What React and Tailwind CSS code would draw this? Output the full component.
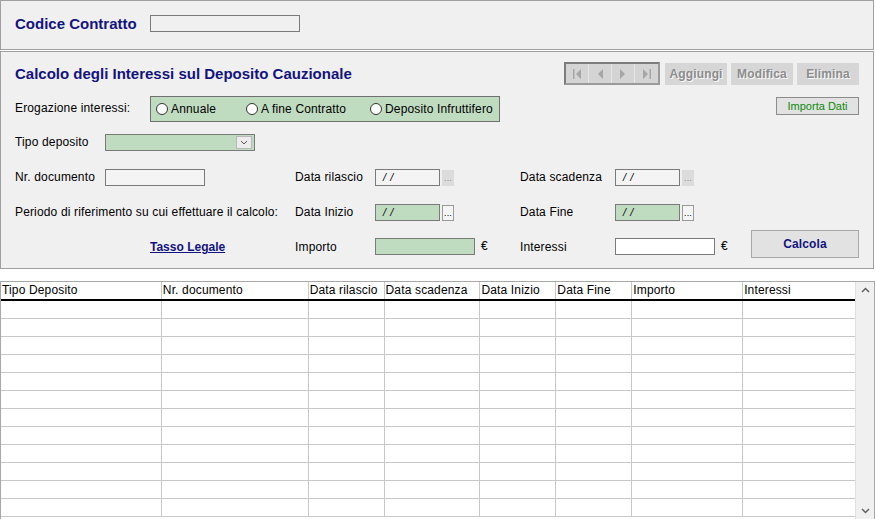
import React from "react";

const navy = "text-[#13137f]";

// Small "..." picker button beside date fields
const DotsButton = ({ enabled }) => (
  <div
    className={`ml-[2px] w-[12px] h-[16px] flex items-end justify-center pb-[2px] text-[9px] leading-none border ${
      enabled ? "bg-[#f4f4f4] border-[#9a9a9a] text-black" : "bg-[#dcdcdc] border-[#dcdcdc] text-[#8a8a8a]"
    }`}
  >
    ...
  </div>
);

const DateField = ({ green, enabled }) => (
  <div className="flex items-center">
    <div
      className={`w-[65px] h-[17px] border border-[#7a7a7a] pl-[7px] text-[11px] italic leading-[15px] flex gap-[4px] ${
        green ? "bg-[#c0dcc0]" : "bg-[#f4f4f4]"
      }`}
    >
      <span>/</span>
      <span>/</span>
    </div>
    <DotsButton enabled={enabled} />
  </div>
);

const Radio = ({ label, className }) => (
  <div className={`flex items-center ${className}`}>
    <span className="w-[12px] h-[12px] rounded-full border border-[#333] bg-white" />
    <span className="ml-[3px]">{label}</span>
  </div>
);

const NavIcon = ({ d }) => (
  <div className="w-[23px] h-full bg-[#d4d4d4] flex items-center justify-center border-r border-[#e6e6e6] last:border-r-0">
    <svg width="12" height="14" viewBox="0 0 12 14">
      <path d={d} fill="#a6a6a6" />
    </svg>
  </div>
);

const GrayButton = ({ children }) => (
  <div className="w-[62px] h-[22px] bg-[#d6d6d6] flex items-center justify-center font-bold text-[12px] text-[#8c8c8c] [text-shadow:1px_1px_0_#fafafa]">
    {children}
  </div>
);

const columns = [
  ["Tipo Deposito", 161],
  ["Nr. documento", 147],
  ["Data rilascio", 76],
  ["Data scadenza", 96],
  ["Data Inizio", 76],
  ["Data Fine", 76],
  ["Importo", 111],
  ["Interessi", 112],
];

export default function App() {
  const rows = Array.from({ length: 12 });

  return (
    <div className="w-[875px] h-[519px] bg-white overflow-hidden text-[12px] tracking-[0.15px] text-black font-['Liberation_Sans',Arial,sans-serif]">
      {/* Codice Contratto panel */}
      <div className="w-[874px] h-[50px] bg-[#f0f0f0] border border-[#a0a0a0] flex items-start pl-[14px] pt-[14px]">
        <div className={`w-[135px] font-bold text-[15px] leading-[17px] tracking-normal ${navy}`}>Codice Contratto</div>
        <div className="w-[150px] h-[17px] border border-[#7a7a7a] bg-[#f0f0f0]" />
      </div>

      {/* Calcolo panel */}
      <div className="w-[874px] h-[218px] mt-[1px] bg-[#f0f0f0] border border-[#a0a0a0] pl-[14px] pr-[14px] flex flex-col">
        {/* title + toolbar */}
        <div className="mt-[10px] h-[23px] flex items-center">
          <div className={`font-bold text-[15px] tracking-normal ${navy} mt-[2px]`}>Calcolo degli Interessi sul Deposito Cauzionale</div>
          <div className="ml-auto flex items-center h-[23px]">
            <div className="h-[23px] flex border-2 border-[#7c7c7c] border-r-[#9a9a9a] border-b-[#9a9a9a]">
              <NavIcon d="M2 2h1.5v10H2zM10 2v10L5 7z" />
              <NavIcon d="M9 2v10L4 7z" />
              <NavIcon d="M3 2v10l5-5z" />
              <NavIcon d="M2 2v10l5-5zM8.5 2H10v10H8.5z" />
            </div>
            <div className="ml-[5px] flex gap-[4px]">
              <GrayButton>Aggiungi</GrayButton>
              <GrayButton>Modifica</GrayButton>
              <GrayButton>Elimina</GrayButton>
            </div>
          </div>
        </div>

        {/* erogazione */}
        <div className="mt-[11px] h-[26px] flex items-start">
          <div className="w-[135px] h-[24px] flex items-center">Erogazione interessi:</div>
          <div className="w-[350px] h-[26px] bg-[#c0dcc0] border border-[#707070] flex items-center pl-[5px]">
            <Radio label="Annuale" className="w-[90px]" />
            <Radio label="A fine Contratto" className="w-[124px]" />
            <Radio label="Deposito Infruttifero" />
          </div>
          <div className="ml-auto mt-[1px] w-[83px] h-[18px] bg-[#e2e2e2] border border-[#8c8c8c] flex items-center justify-center text-[11px] tracking-normal text-[#0a8a0a]">
            Importa Dati
          </div>
        </div>

        {/* tipo deposito */}
        <div className="mt-[12px] h-[17px] flex items-center">
          <div className="w-[90px] -mt-[1px]">Tipo deposito</div>
          <div className="w-[150px] h-[17px] bg-[#c0dcc0] border border-[#7a7a7a] flex justify-end items-center pr-[2px]">
            <div className="w-[16px] h-[13px] bg-[#ececec] border border-[#b8b8b8] flex items-center justify-center">
              <svg width="8" height="5" viewBox="0 0 8 5">
                <path d="M1 1l3 3 3-3" stroke="#555" strokeWidth="1" fill="none" />
              </svg>
            </div>
          </div>
        </div>

        {/* nr documento */}
        <div className="mt-[18px] h-[17px] flex items-center">
          <div className="w-[90px] -mt-[1px]">Nr. documento</div>
          <div className="w-[100px] h-[17px] border border-[#7a7a7a] bg-[#f4f4f4]" />
          <div className="ml-[90px] w-[80px] -mt-[1px]">Data rilascio</div>
          <DateField />
          <div className="ml-[66px] w-[95px] -mt-[1px]">Data scadenza</div>
          <DateField />
        </div>

        {/* periodo */}
        <div className="mt-[18px] h-[17px] flex items-center">
          <div className="w-[280px] -mt-[1px]">Periodo di riferimento su cui effettuare il calcolo:</div>
          <div className="w-[80px] -mt-[1px]">Data Inizio</div>
          <DateField green enabled />
          <div className="ml-[66px] w-[95px] -mt-[1px]">Data Fine</div>
          <DateField green enabled />
        </div>

        {/* importo */}
        <div className="mt-[9px] h-[28px] flex items-start">
          <div className="w-[135px]" />
          <div className={`w-[145px] mt-[9px] leading-[17px] font-bold underline tracking-normal ${navy}`}>Tasso Legale</div>
          <div className="w-[80px] mt-[9px] leading-[17px]">Importo</div>
          <div className="w-[100px] mt-[8px] h-[17px] bg-[#c0dcc0] border border-[#7a7a7a]" />
          <div className="ml-[6px] w-[39px] mt-[8px] leading-[17px]">€</div>
          <div className="w-[95px] mt-[9px] leading-[17px]">Interessi</div>
          <div className="w-[100px] mt-[8px] h-[17px] bg-white border border-[#7a7a7a]" />
          <div className="ml-[6px] mt-[8px] leading-[17px]">€</div>
          <div className="ml-auto w-[108px] h-[28px] bg-[#e2e2e2] border border-[#a8a8a8] flex items-center justify-center">
            <span className={`font-bold ${navy}`}>Calcola</span>
          </div>
        </div>
      </div>

      {/* table */}
      <div className="mt-[12px] w-[875px] h-[239px] border border-[#a8a8a8] flex">
        <div className="w-[854px]">
          <div className="flex h-[19px] border-b-2 border-black">
            {columns.map(([name, w], i) => (
              <div
                key={name}
                style={{ width: w }}
                className={`h-full leading-[17px] pl-[1px] whitespace-nowrap overflow-hidden ${i < columns.length - 1 ? "border-r border-[#c8c8c8]" : ""}`}
              >
                {name}
              </div>
            ))}
          </div>
          {rows.map((_, r) => (
            <div key={r} className="flex h-[18px] border-b border-[#c8c8c8]">
              {columns.map(([name, w], i) => (
                <div
                  key={name}
                  style={{ width: w }}
                  className={`h-full ${i < columns.length - 1 ? "border-r border-[#c8c8c8]" : ""}`}
                />
              ))}
            </div>
          ))}
        </div>
        <div className="w-[19px] h-full bg-[#f0f0f0] border-l border-[#e0e0e0] flex flex-col justify-between items-center py-[5px]">
          <svg width="9" height="6" viewBox="0 0 9 6">
            <path d="M1 5l3.5-3.5L8 5" stroke="#606060" strokeWidth="1.5" fill="none" />
          </svg>
          <svg width="9" height="6" viewBox="0 0 9 6">
            <path d="M1 1l3.5 3.5L8 1" stroke="#606060" strokeWidth="1.5" fill="none" />
          </svg>
        </div>
      </div>
    </div>
  );
}
